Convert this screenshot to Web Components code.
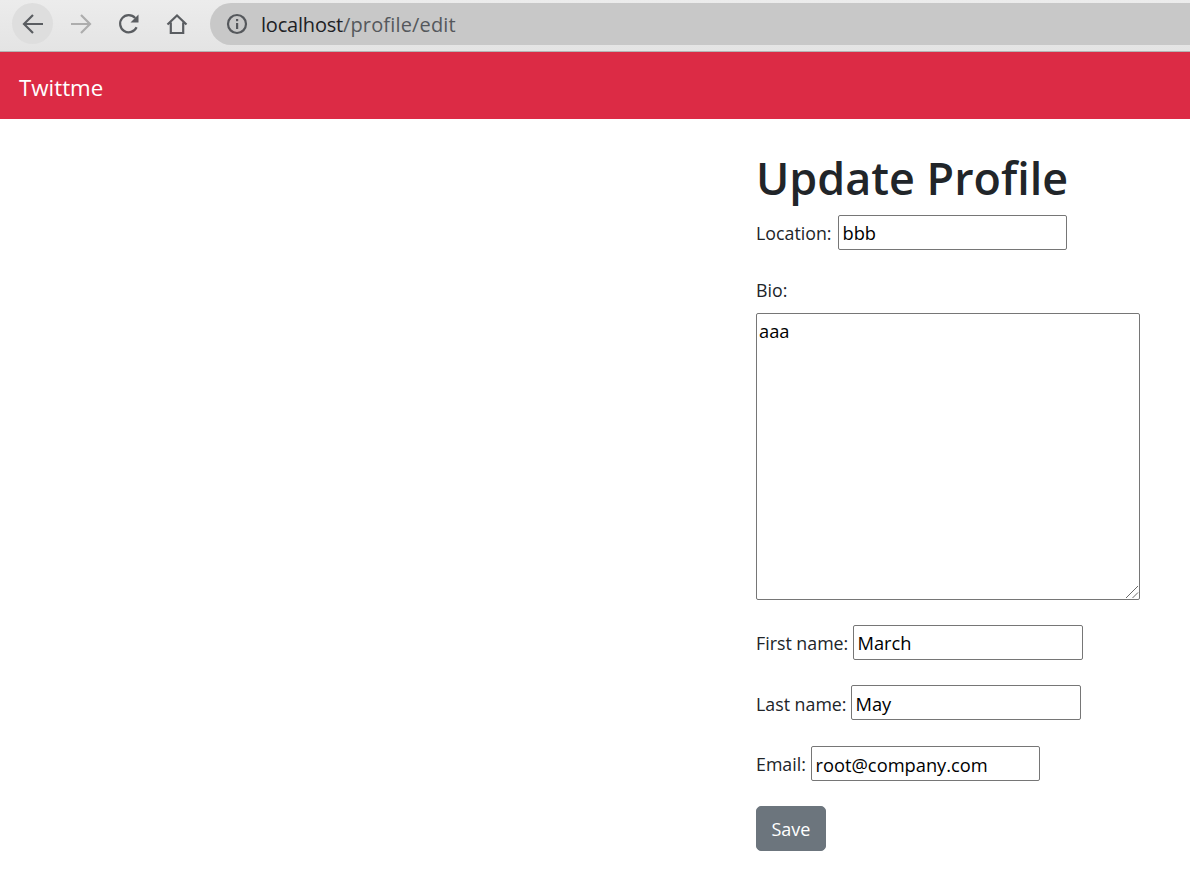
<!DOCTYPE html>
<html>
<head>
<meta charset="utf-8">
<title>Twittme</title>
<style>
  html, body { margin: 0; padding: 0; background: #fff; }
  body { font-family: "Open Sans", "Noto Sans", sans-serif; color: #212529; }
</style>
</head>
<body>
<browser-bar url-host="localhost" url-path="/profile/edit"></browser-bar>
<nav-bar>Twittme</nav-bar>
<page-grid>
  <profile-form></profile-form>
</page-grid>

<script>
class BrowserBar extends HTMLElement {
  constructor() {
    super()
    this.shadow = this.attachShadow({ mode: 'open' })
  }

  connectedCallback() {
    this.shadow.innerHTML = `
    <style>
      :host {
        display: flex;
        align-items: flex-start;
        height: 48px;
        padding: 3px 0 0 12px;
        border-bottom: 1px solid #b4b4b4;
        background: linear-gradient(#ececec, #e4e4e4);
        font-family: "Open Sans", sans-serif;
      }
      .btn {
        width: 41px;
        height: 41px;
        margin-right: 7px;
        border-radius: 50%;
        display: flex;
        align-items: center;
        justify-content: center;
        flex: none;
      }
      .btn.active { background: #dedede; }
      .url {
        flex: 1;
        height: 42px;
        margin-left: 6px;
        border-radius: 21px 0 0 21px;
        background: #c8c8c8;
        display: flex;
        align-items: center;
        padding-left: 16px;
        font-size: 20px;
        letter-spacing: -0.2px;
      }
      .url svg { margin-right: 13px; flex: none; }
      .host { color: #202124; }
      .path { color: #55585c; letter-spacing: 0.15px; }
    </style>
    <div class="btn active">
      <svg width="24" height="24" viewBox="0 0 24 24" fill="none" stroke="#5a5d61" stroke-width="2.2"><path d="M22 12H3M12 3l-9 9 9 9"/></svg>
    </div>
    <div class="btn">
      <svg width="24" height="24" viewBox="0 0 24 24" fill="none" stroke="#adadad" stroke-width="2.2"><path d="M2 12h19M12 3l9 9-9 9"/></svg>
    </div>
    <div class="btn">
      <svg width="24" height="24" viewBox="0 0 24 24" fill="none" stroke="#5a5d61" stroke-width="2.2"><path d="M19.6 15.2A8.6 8.6 0 1 1 18.2 6"/><path d="M21.5 2.5v8h-8z" fill="#5a5d61" stroke="none"/></svg>
    </div>
    <div class="btn">
      <svg width="24" height="24" viewBox="0 0 24 24" fill="none" stroke="#5a5d61" stroke-width="2.2"><path d="M2.5 12.5 12 3.5l9.5 9M5.8 10.5V21h12.4V10.5"/></svg>
    </div>
    <div class="url">
      <svg width="22" height="22" viewBox="0 0 22 22" fill="none"><circle cx="11" cy="11" r="9" stroke="#55585c" stroke-width="2.2"/><rect x="10" y="10" width="2.2" height="6" fill="#55585c"/><rect x="10" y="6" width="2.2" height="2.2" fill="#55585c"/></svg>
      <span class="host">${this.getAttribute('url-host')}</span><span class="path">${this.getAttribute('url-path')}</span>
    </div>
    `
  }
}

class NavBar extends HTMLElement {
  constructor() {
    super()
    this.shadow = this.attachShadow({ mode: 'open' })
    this.shadow.innerHTML = `
    <style>
      :host {
        display: flex;
        align-items: center;
        height: 63px;
        padding: 4px 0 0 19px;
        background: #dc2b45;
        color: #fff;
        font-size: 22.3px;
      }
    </style>
    <slot></slot>
    `
  }
}

class PageGrid extends HTMLElement {
  constructor() {
    super()
    this.shadow = this.attachShadow({ mode: 'open' })
    this.shadow.innerHTML = `
    <style>
      :host {
        display: grid;
        grid-template-columns: 756px 384px;
      }
      .side { grid-column: 2; }
    </style>
    <div class="side"><slot></slot></div>
    `
  }
}

class FormRow extends HTMLElement {
  constructor() {
    super()
    this.shadow = this.attachShadow({ mode: 'open' })
  }

  connectedCallback() {
    const width = this.getAttribute('width') || 230
    this.shadow.innerHTML = `
    <style>
      :host {
        display: flex;
        align-items: center;
        gap: 5px;
        font-size: 17.8px;
        height: 35px;
      }
      label {
        flex: none;
        width: ${this.getAttribute('label-width')}px;
        white-space: nowrap;
      }
      .input {
        box-sizing: border-box;
        width: ${width}px;
        height: 35px;
        padding: 0 3.5px;
        font: 18.3px "Open Sans", sans-serif;
        color: #000;
        background: #fff;
        border: 1px solid #767676;
        border-radius: 2px;
        outline: none;
      }
      :host([low]) label, :host([low]) .input { padding-top: 2px; }
    </style>
    <label for="f">${this.getAttribute('label')}</label>
    <input id="f" class="input" value="${this.getAttribute('value')}">
    `
  }
}

class ProfileForm extends HTMLElement {
  constructor() {
    super()
    this.shadow = this.attachShadow({ mode: 'open' })
    this.shadow.innerHTML = `
    <style>
      :host {
        display: block;
        padding-top: 26px;
        font-size: 17.8px;
      }
      h1 {
        margin: 0 0 4px;
        font-size: 44.9px;
        line-height: 66px;
        font-weight: 600;
        color: #212529;
      }
      .bio-label { margin: 27px 0 9px; line-height: 27px; height: 27px; }
      .area {
        position: relative;
        width: 384px;
        height: 287px;
        margin-bottom: 25px;
      }
      textarea {
        display: block;
        box-sizing: border-box;
        width: 100%;
        height: 100%;
        margin: 0;
        padding: 3px 2px 2px;
        resize: none;
        font: 18.3px/1.5 "Open Sans", sans-serif;
        color: #000;
        border: 1px solid #767676;
        border-radius: 2px;
        outline: none;
      }
      .grip { position: absolute; right: 1px; bottom: 1px; }
      form-row { margin-bottom: 25.3px; }
      button {
        display: block;
        width: 70px;
        height: 45px;
        padding: 2px 0 0;
        border: 1px solid #6c757d;
        border-radius: 5px;
        background: #6c757d;
        color: #fff;
        font: 18px "Open Sans", sans-serif;
      }
    </style>
    <h1>Update Profile</h1>
    <form-row label="Location:" label-width="77" value="bbb" width="229"></form-row>
    <div class="bio-label">Bio:</div>
    <div class="area">
      <textarea>aaa</textarea>
      <svg class="grip" width="14" height="14" viewBox="0 0 14 14" fill="none" stroke="#6a6a6a" stroke-width="1"><path d="M1 13 13 1M7.5 13 13 7.5"/></svg>
    </div>
    <form-row label="First name:" label-width="92" value="March" width="230"></form-row>
    <form-row low label="Last name:" label-width="90" value="May" width="230"></form-row>
    <form-row low label="Email:" label-width="50" value="root@company.com" width="229"></form-row>
    <button type="button">Save</button>
    `
  }
}

customElements.define('browser-bar', BrowserBar)
customElements.define('nav-bar', NavBar)
customElements.define('page-grid', PageGrid)
customElements.define('form-row', FormRow)
customElements.define('profile-form', ProfileForm)
</script>
</body>
</html>
